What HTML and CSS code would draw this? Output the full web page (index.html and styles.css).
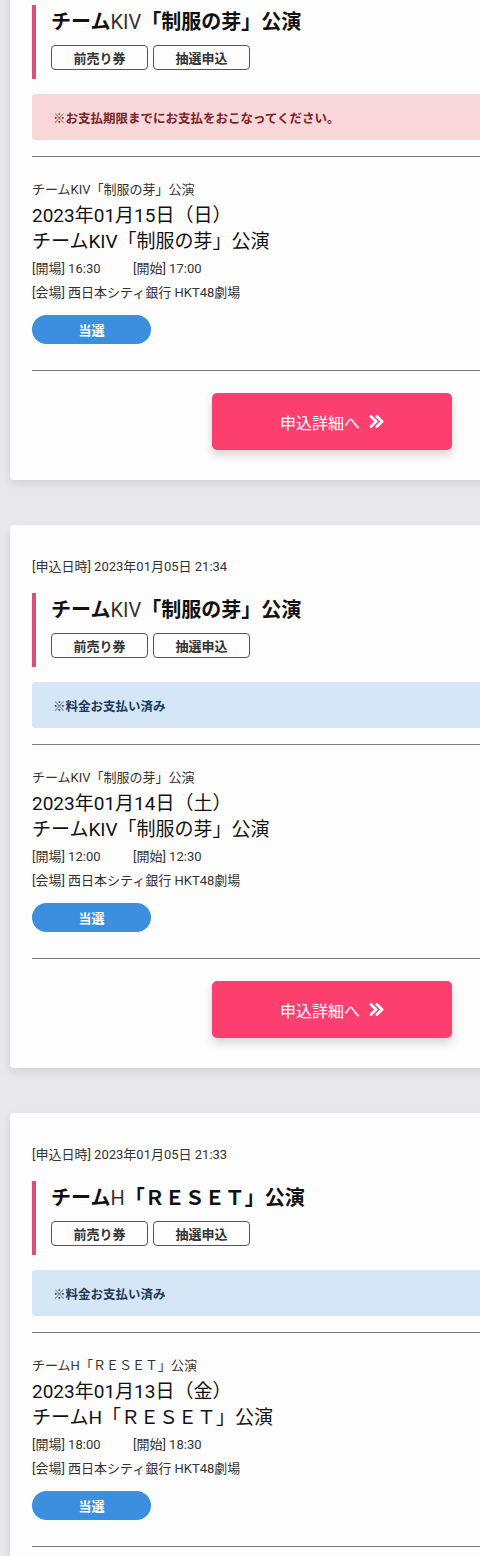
FILE: index.html
```html
<!DOCTYPE html>
<html lang="ja">
<head>
<meta charset="utf-8">
<title>申込履歴</title>
<link rel="stylesheet" href="styles.css">
</head>
<body>
<div class="list">

  <section class="card">
    <p class="applied">[申込日時] 2023年01月05日 21:35</p>
    <div class="perf">
      <h2 class="perf-title">チーム<span class="lt">KIV</span>「制服の芽」公演</h2>
      <div class="tags"><span class="tag">前売り券</span><span class="tag">抽選申込</span></div>
    </div>
    <div class="notice notice-warn">※お支払期限までにお支払をおこなってください。</div>
    <hr class="rule">
    <p class="sub">チームKIV「制服の芽」公演</p>
    <p class="date">2023年01月15日（日）</p>
    <p class="name">チームKIV「制服の芽」公演</p>
    <p class="meta"><span class="open">[開場] 16:30</span><span>[開始] 17:00</span></p>
    <p class="meta">[会場] 西日本シティ銀行 HKT48劇場</p>
    <span class="pill">当選</span>
    <hr class="rule rule-low">
    <a class="detail" href="#">申込詳細へ<svg class="chev" viewBox="0 0 16 14" width="15" height="13"><path d="M2 1.5 L7.5 7 L2 12.5 M8.5 1.5 L14 7 L8.5 12.5" fill="none" stroke="#fff" stroke-width="3" stroke-linecap="round" stroke-linejoin="round"/></svg></a>
  </section>

  <section class="card">
    <p class="applied">[申込日時] 2023年01月05日 21:34</p>
    <div class="perf">
      <h2 class="perf-title">チーム<span class="lt">KIV</span>「制服の芽」公演</h2>
      <div class="tags"><span class="tag">前売り券</span><span class="tag">抽選申込</span></div>
    </div>
    <div class="notice notice-info">※料金お支払い済み</div>
    <hr class="rule">
    <p class="sub">チームKIV「制服の芽」公演</p>
    <p class="date">2023年01月14日（土）</p>
    <p class="name">チームKIV「制服の芽」公演</p>
    <p class="meta"><span class="open">[開場] 12:00</span><span>[開始] 12:30</span></p>
    <p class="meta">[会場] 西日本シティ銀行 HKT48劇場</p>
    <span class="pill">当選</span>
    <hr class="rule rule-low">
    <a class="detail" href="#">申込詳細へ<svg class="chev" viewBox="0 0 16 14" width="15" height="13"><path d="M2 1.5 L7.5 7 L2 12.5 M8.5 1.5 L14 7 L8.5 12.5" fill="none" stroke="#fff" stroke-width="3" stroke-linecap="round" stroke-linejoin="round"/></svg></a>
  </section>

  <section class="card">
    <p class="applied">[申込日時] 2023年01月05日 21:33</p>
    <div class="perf">
      <h2 class="perf-title">チーム<span class="lt">H</span>「ＲＥＳＥＴ」公演</h2>
      <div class="tags"><span class="tag">前売り券</span><span class="tag">抽選申込</span></div>
    </div>
    <div class="notice notice-info">※料金お支払い済み</div>
    <hr class="rule">
    <p class="sub">チームH「ＲＥＳＥＴ」公演</p>
    <p class="date">2023年01月13日（金）</p>
    <p class="name">チームH「ＲＥＳＥＴ」公演</p>
    <p class="meta"><span class="open">[開場] 18:00</span><span>[開始] 18:30</span></p>
    <p class="meta">[会場] 西日本シティ銀行 HKT48劇場</p>
    <span class="pill">当選</span>
    <hr class="rule rule-low">
    <a class="detail" href="#">申込詳細へ<svg class="chev" viewBox="0 0 16 14" width="15" height="13"><path d="M2 1.5 L7.5 7 L2 12.5 M8.5 1.5 L14 7 L8.5 12.5" fill="none" stroke="#fff" stroke-width="3" stroke-linecap="round" stroke-linejoin="round"/></svg></a>
  </section>

</div>
</body>
</html>
```

FILE: styles.css
```css
html {
  background: #e9e9ed;
  overflow: hidden;
}
body {
  margin: 0;
  width: 480px;
  overflow: hidden;
  font-family: Roboto, "Noto Sans CJK JP", sans-serif;
  color: #222;
}
.list {
  display: flex;
  flex-direction: column;
  gap: 45px;
  margin-top: -63px;
  padding-left: 10px;
}
.card {
  width: 510px;
  box-sizing: border-box;
  background: #fdfdfd;
  border-radius: 4px;
  box-shadow: 0 4px 10px rgba(0, 0, 0, 0.10);
  padding: 32px 0 30px 22px;
  display: flex;
  flex-direction: column;
  align-items: flex-start;
}
.applied {
  margin: 0;
  font-size: 13px;
  line-height: 20px;
  color: #333;
}
.perf {
  align-self: stretch;
  margin-top: 16px;
  border-left: 4px solid #dd4f7b;
  padding: 4px 0 9px 15px;
}
.perf-title {
  margin: 0;
  font-size: 20px;
  line-height: 26px;
  font-weight: 700;
  color: #111;
}
.lt {
  font-weight: 400;
  color: #333;
}
.tags {
  display: flex;
  gap: 5px;
  margin-top: 10px;
}
.tag {
  box-sizing: border-box;
  width: 97px;
  height: 25px;
  border: 1px solid #555;
  border-radius: 4px;
  display: flex;
  align-items: center;
  justify-content: center;
  font-size: 13px;
  font-weight: 700;
  color: #333;
}
.notice {
  align-self: stretch;
  margin-top: 15px;
  height: 46px;
  box-sizing: border-box;
  padding-left: 21px;
  display: flex;
  align-items: center;
  border-radius: 3px;
  font-size: 12.5px;
  font-weight: 700;
}
.notice-warn {
  background: #f8d6d9;
  color: #7d2226;
}
.notice-info {
  background: #d5e7f6;
  color: #1b3a5c;
}
.rule {
  align-self: stretch;
  margin: 16px 0 0;
  border: 0;
  border-top: 1px solid #7a7a7a;
  height: 0;
}
.rule-low {
  margin-top: 26px;
}
.sub {
  margin: 24px 0 0;
  font-size: 13px;
  line-height: 18px;
  color: #333;
}
.date,
.name {
  margin: 0;
  font-size: 19px;
  line-height: 26px;
  color: #111;
}
.date {
  margin-top: 4px;
}
.meta {
  margin: 0;
  font-size: 13px;
  line-height: 24px;
  color: #333;
}
.name + .meta {
  margin-top: 2px;
}
.open {
  display: inline-block;
  width: 101px;
}
.pill {
  margin-top: 10px;
  width: 119px;
  height: 29px;
  border-radius: 15px;
  background: #3b8fde;
  color: #fff;
  font-size: 13px;
  font-weight: 700;
  display: flex;
  align-items: center;
  justify-content: center;
}
.detail {
  margin: 22px 0 0 180px;
  width: 240px;
  height: 57px;
  border-radius: 5px;
  background: #fc3f6e;
  box-shadow: 0 5px 10px rgba(0, 0, 0, 0.16);
  color: #fff;
  text-decoration: none;
  font-size: 16px;
  display: flex;
  align-items: center;
  justify-content: center;
  gap: 9px;
}
.chev {
  display: block;
}
```
